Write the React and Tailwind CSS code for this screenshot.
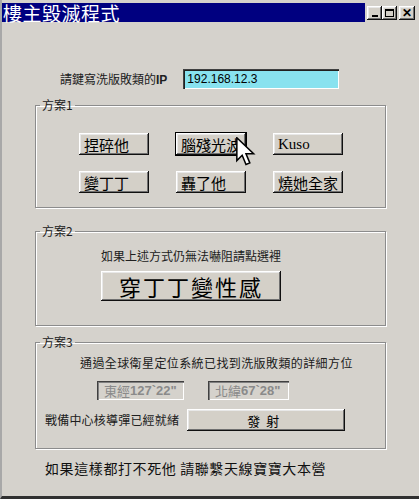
const btn =
  "bg-[#d4d0c8] shadow-[inset_-1px_-1px_0_#101010,inset_1px_1px_0_#ffffff,inset_-2px_-2px_0_#707070,inset_2px_2px_0_#e8e8e8]";

function Group({ title, className = "", children }) {
  return (
    <fieldset
      className={`mx-[33px] border border-[#8c8c8c] shadow-[inset_1px_1px_0_#ffffff,1px_1px_0_#ffffff] ${className}`}
    >
      <legend className="ml-[4px] px-[2px] text-[12px] leading-[14px] text-[#202020]">
        {title}
      </legend>
      {children}
    </fieldset>
  );
}

function PlanButton({ label, focused = false, latin = false }) {
  return (
    <button
      type="button"
      className={`h-[22px] w-[70px] pl-[5px] text-left text-[15px] leading-none text-black ${btn} ${
        focused ? "outline outline-1 outline-black" : ""
      }`}
      style={latin ? { fontFamily: '"Liberation Serif", serif' } : undefined}
    >
      {label}
    </button>
  );
}

function CoordBox({ name, value, width }) {
  return (
    <div
      className={`flex h-[19px] items-center pl-[7px] text-[13px] text-[#8a8a8a] shadow-[inset_1px_1px_0_#404040,inset_2px_2px_0_#808080,inset_-1px_-1px_0_#ffffff] ${width}`}
    >
      <span>{name}</span>
      <span className="font-bold" style={{ fontFamily: '"Liberation Sans", sans-serif' }}>
        {value}
      </span>
    </div>
  );
}

function Cursor() {
  return (
    <svg
      className="absolute left-[236px] top-[137px]"
      width="20"
      height="29"
      viewBox="0 0 13 19"
    >
      <path
        d="M0.5 0.5 L0.5 15.5 L4 12 L6.5 18 L9 17 L6.5 11 L11.5 11 Z"
        fill="#ffffff"
        stroke="#000000"
        strokeWidth="1"
        strokeLinejoin="miter"
      />
    </svg>
  );
}

export default function App() {
  return (
    <div
      className="relative h-[499px] w-[419px] overflow-hidden bg-[#d5d2cc] text-black"
      style={{ fontFamily: '"Noto Sans CJK TC", "Noto Sans CJK SC", sans-serif' }}
    >
      <div className="flex h-full flex-col border-b-[3px] border-l-[2px] border-b-[#303030] border-l-[#a8a8a8] pt-[3px]">
        {/* title bar */}
        <div className="flex h-[19px] items-center">
          <div className="flex h-full w-[363px] items-center bg-[#000080] pl-[1px]">
            <span className="text-[19px] leading-none tracking-[0.5px] text-white">
              樓主毀滅程式
            </span>
          </div>
          <div className="ml-[2px] flex items-center">
            <div className={`flex h-[14px] w-[15px] items-end justify-center pb-[3px] ${btn}`}>
              <div className="h-[2px] w-[6px] bg-black" />
            </div>
            <div className={`flex h-[14px] w-[15px] items-center justify-center ${btn}`}>
              <div className="h-[8px] w-[9px] border border-t-2 border-black" />
            </div>
            <div
              className={`ml-[2px] flex h-[14px] w-[16px] items-center justify-center text-[12px] font-bold leading-none ${btn}`}
              style={{ fontFamily: '"Liberation Sans", sans-serif' }}
            >
              ✕
            </div>
          </div>
        </div>

        {/* IP row */}
        <div className="mt-[47px] flex items-center">
          <span className="ml-[58px] text-[12px] text-[#202020]">
            請鍵寫洗版敗類的
            <span className="font-bold" style={{ fontFamily: '"Liberation Sans", sans-serif' }}>
              IP
            </span>
          </span>
          <div className="ml-[16px] flex h-[20px] w-[156px] items-center bg-[#88e2ef] pl-[4px] text-[12px] shadow-[inset_1px_1px_0_#404040,inset_2px_2px_0_#202020,inset_-1px_-1px_0_#ffffff]">
            <span style={{ fontFamily: '"Liberation Sans", sans-serif' }}>192.168.12.3</span>
          </div>
        </div>

        {/* plan 1 */}
        <Group title="方案1" className="mt-[9px] h-[110px]">
          <div className="ml-[43px] mt-[21px] grid grid-cols-[70px_70px_70px] gap-x-[27px] gap-y-[16px]">
            <PlanButton label="捏碎他" />
            <PlanButton label="腦殘光波" focused />
            <PlanButton label="Kuso" latin />
            <PlanButton label="變丁丁" />
            <PlanButton label="轟了他" />
            <PlanButton label="燒她全家" />
          </div>
        </Group>

        {/* plan 2 */}
        <Group title="方案2" className="mt-[16px] h-[102px]">
          <div className="ml-[65px] mt-[9px] flex w-[180px] flex-col items-center">
            <span className="whitespace-nowrap text-[12px] text-[#202020]">
              如果上述方式仍無法嚇阻請點選裡
            </span>
            <button
              type="button"
              className={`mt-[6px] h-[30px] w-[180px] text-[22px] leading-none tracking-[2px] ${btn}`}
            >
              穿丁丁變性感
            </button>
          </div>
        </Group>

        {/* plan 3 */}
        <Group title="方案3" className="mt-[9px] h-[114px]">
          <div className="mt-[5px] flex flex-col">
            <span className="ml-[44px] whitespace-nowrap text-[12px] tracking-[0.4px] text-[#202020]">
              通過全球衛星定位系統已找到洗版敗類的詳細方位
            </span>
            <div className="ml-[61px] mt-[9px] flex gap-[24px]">
              <CoordBox name="東經" value={"127`22\""} width="w-[87px]" />
              <CoordBox name="北緯" value={"67`28\""} width="w-[81px]" />
            </div>
            <div className="mt-[9px] flex items-center">
              <span className="ml-[9px] text-[12px] tracking-[0.2px] text-[#202020]">
                戰備中心核導彈已經就緒
              </span>
              <button
                type="button"
                className={`ml-[8px] h-[22px] w-[158px] text-[13px] leading-none tracking-[6px] ${btn}`}
              >
                發射
              </button>
            </div>
          </div>
        </Group>

        {/* footer */}
        <div className="ml-[43px] mt-[9px] text-[14px] tracking-[0.6px] text-[#101010]">
          如果這樣都打不死他 請聯繫天線寶寶大本營
        </div>
      </div>
      <Cursor />
    </div>
  );
}
